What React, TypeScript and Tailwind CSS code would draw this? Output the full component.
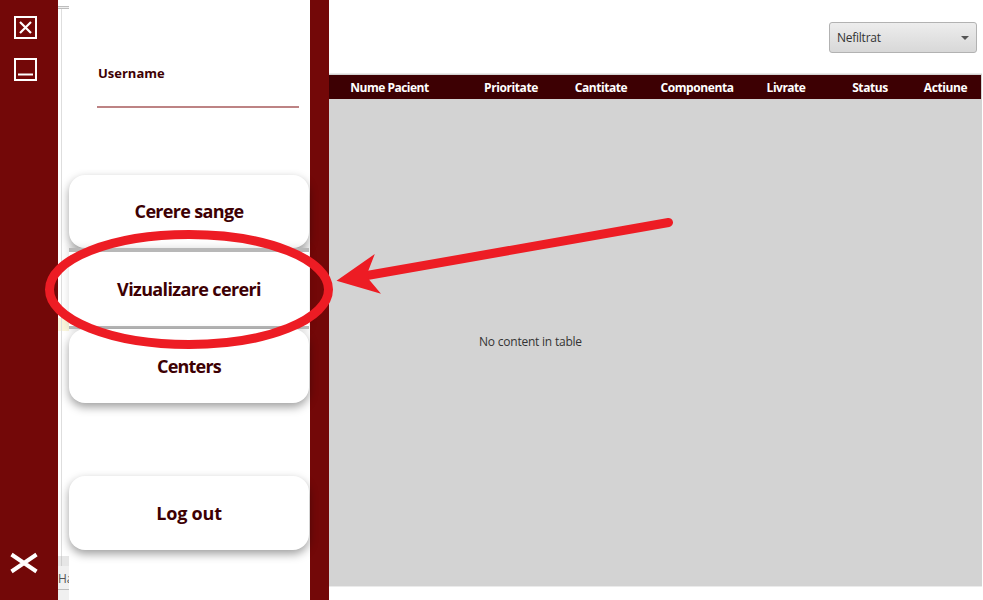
import type { ReactNode } from "react";

const columns = [
  { label: "Nume Pacient", box: "w-[131px] pr-[10px] tracking-[-0.5px]" },
  { label: "Prioritate", box: "w-[102px] tracking-[-0.4px]" },
  { label: "Cantitate", box: "w-[78px] tracking-[-0.45px]" },
  { label: "Componenta", box: "w-[114px] tracking-[-0.4px]" },
  { label: "Livrate", box: "w-[64px] tracking-[-0.5px]" },
  { label: "Status", box: "w-[104px] tracking-[-0.4px]" },
  { label: "Actiune", box: "w-[47px] tracking-[-0.4px]" },
];

function MenuButton({ children, className = "" }: { children: ReactNode; className?: string }) {
  return (
    <button
      className={`flex w-[240px] shrink-0 items-center justify-center bg-white text-[18px] font-bold text-[#3d0003] ${className}`}
    >
      {children}
    </button>
  );
}

function SideBar() {
  return (
    <aside className="flex w-[58px] shrink-0 flex-col bg-[#730808] pt-4 text-white">
      <svg width="24" height="24" className="ml-[14px] shrink-0" fill="none" stroke="white">
        <rect x="1" y="1" width="21" height="21" strokeWidth="2" />
        <path d="M6 6L17 17M17 6L6 17" strokeWidth="2.2" />
      </svg>
      <svg width="24" height="24" className="mt-[18px] ml-[14px] shrink-0" fill="none" stroke="white">
        <rect x="1" y="1" width="21" height="21" strokeWidth="2" />
        <path d="M4 16.5H19" strokeWidth="2" />
      </svg>
      <svg width="30" height="24" className="mt-auto mb-[25px] ml-[9px] shrink-0" stroke="white" strokeWidth="4">
        <path d="M2.5 3.5L27.5 20.5M27.5 3.5L2.5 20.5" />
      </svg>
    </aside>
  );
}

function Gutter() {
  return (
    <div className="flex w-[11px] shrink-0 flex-col overflow-hidden bg-white">
      <div className="mt-[6px] h-[3px] shrink-0 border-y border-[#bdbdbd] bg-[#eee]" />
      <div className="ml-[3px] h-[309px] shrink-0 border-l border-[#dedede]" />
      <div className="h-[13px] shrink-0 bg-[#faf6dc] pl-[3px]">
        <div className="h-full border-l border-[#dedede]" />
      </div>
      <div className="ml-[3px] h-[225px] shrink-0 border-l border-[#dedede]" />
      <div className="h-[10px] shrink-0 bg-[#e6e6e6] pl-[3px]">
        <div className="h-full border-l border-[#cfcfcf]" />
      </div>
      <div className="flex h-[24px] shrink-0 items-center border-b border-[#bdbdbd] bg-[#f0f0f0] pt-[2px] text-[12px] text-[#555]">
        Ha
      </div>
      <div className="flex-1 bg-[#f0f0f0]" />
    </div>
  );
}

function MenuPanel() {
  return (
    <nav className="relative z-10 flex w-[241px] shrink-0 flex-col bg-white">
      <div className="ml-[28px] mt-[63px] h-[45px] w-[202px] shrink-0 border-b-2 border-[#bd8384] pl-px text-[13px] leading-[20px] font-bold text-[#3d0003]">
        Username
      </div>
      <MenuButton className="mt-[67px] h-[73px] rounded-[16px] shadow-[0_4px_10px_rgba(0,0,0,0.38)]">
        <span className="tracking-[-0.67px]">Cerere sange</span>
      </MenuButton>
      <MenuButton className="relative h-[81px] border-t-4 border-b-3 border-[#b8b8b8] shadow-[0_0_8px_rgba(0,0,0,0.15)]">
        <span className="tracking-[-0.63px]">Vizualizare cereri</span>
      </MenuButton>
      <MenuButton className="relative h-[74px] rounded-[16px] shadow-[0_4px_10px_rgba(0,0,0,0.38)]">
        <span className="tracking-[-0.8px]">Centers</span>
      </MenuButton>
      <MenuButton className="mt-[73px] h-[74px] rounded-[16px] shadow-[0_4px_10px_rgba(0,0,0,0.38)]">
        <span className="tracking-[-0.2px]">Log out</span>
      </MenuButton>
    </nav>
  );
}

function RequestsTable() {
  return (
    <section className="mr-px flex h-[514px] flex-col border-y border-[#ebebeb] bg-[#d3d3d3]">
      <div className="mt-px mr-px flex h-[24px] shrink-0 items-center bg-[#3d0003] pt-px text-[12px] font-bold text-white">
        {columns.map((c) => (
          <div key={c.label} className={`flex shrink-0 justify-center whitespace-nowrap ${c.box}`}>
            {c.label}
          </div>
        ))}
      </div>
      <div className="flex flex-1 items-center pb-px pl-[150px] text-[12px] tracking-[-0.22px] text-[#333]">
        <span>No content in table</span>
      </div>
    </section>
  );
}

function Annotation() {
  return (
    <svg width="983" height="600" className="pointer-events-none absolute top-0 left-0 z-20">
      <ellipse cx="189" cy="289.5" rx="139.5" ry="55" fill="none" stroke="#ed1c24" strokeWidth="9" />
      <path d="M668.5 222.5L367 275.5" stroke="#ed1c24" strokeWidth="9" strokeLinecap="round" />
      <path d="M336.5 280.7L374.8 254L368 271.5L369 279.5L381 293.7Z" fill="#ed1c24" />
    </svg>
  );
}

export default function App() {
  return (
    <div className="relative flex h-[600px] w-[983px] overflow-hidden bg-white font-['Open_Sans','Noto_Sans',sans-serif]">
      <SideBar />
      <Gutter />
      <MenuPanel />
      <div className="w-[19px] shrink-0 bg-[#730808]" />
      <main className="flex min-w-0 flex-1 flex-col">
        <div className="flex h-[73px] shrink-0 justify-end pt-[22px] pr-[6px]">
          <button className="flex h-[31px] w-[148px] items-center justify-between rounded-[3px] border border-[#b2b2b2] bg-linear-to-b from-[#ededed] to-[#d8d8d8] pr-[7px] pl-[7px] text-[12px] text-[#333]">
            <span className="tracking-[-0.25px]">Nefiltrat</span>
            <svg width="8" height="4" fill="#555">
              <path d="M0 0H8L4 4Z" />
            </svg>
          </button>
        </div>
        <RequestsTable />
      </main>
      <Annotation />
    </div>
  );
}
